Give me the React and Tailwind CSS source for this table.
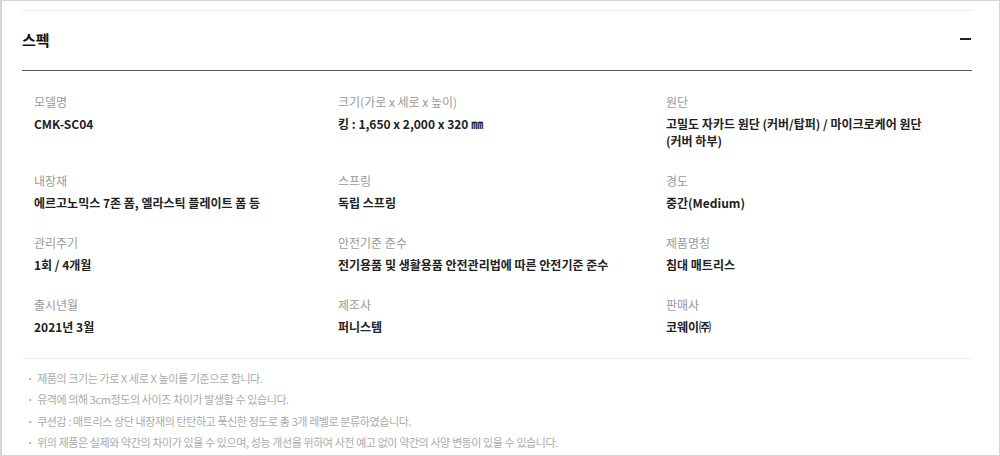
const specs = [
  { label: '모델명', value: 'CMK-SC04' },
  { label: '크기(가로 x 세로 x 높이)', value: '킹 : 1,650 x 2,000 x 320 ㎜' },
  { label: '원단', value: '고밀도 자카드 원단 (커버/탑퍼) / 마이크로케어 원단 (커버 하부)' },
  { label: '내장재', value: '에르고노믹스 7존 폼, 엘라스틱 플레이트 폼 등' },
  { label: '스프링', value: '독립 스프링' },
  { label: '경도', value: '중간(Medium)' },
  { label: '관리주기', value: '1회 / 4개월' },
  { label: '안전기준 준수', value: '전기용품 및 생활용품 안전관리법에 따른 안전기준 준수' },
  { label: '제품명칭', value: '침대 매트리스' },
  { label: '출시년월', value: '2021년 3월' },
  { label: '제조사', value: '퍼니스템' },
  { label: '판매사', value: '코웨이㈜' },
];

const notes = [
  '제품의 크기는 가로 X 세로 X 높이를 기준으로 합니다.',
  '유격에 의해 3cm정도의 사이즈 차이가 발생할 수 있습니다.',
  '쿠션감 : 매트리스 상단 내장재의 탄탄하고 푹신한 정도로 총 3개 레벨로 분류하였습니다.',
  '위의 제품은 실제와 약간의 차이가 있을 수 있으며, 성능 개선을 위하여 사전 예고 없이 약간의 사양 변동이 있을 수 있습니다.',
];

export default function App() {
  return (
    <div className="w-[1000px] h-[456px] overflow-hidden bg-white border border-l-2 border-[#d6d6d6] font-['Noto_Sans_CJK_KR','Noto_Sans',sans-serif]">
      <div className="ml-[20px] mt-[9px] w-[950px] border-t border-[#ececec]">
        {/* Header */}
        <div className="h-[60px] pb-[3px] flex items-center justify-between border-b border-[#555]">
          <h2 className="text-[15px] font-bold text-[#111] leading-none">스펙</h2>
          <span className="w-[11px] h-[2px] bg-[#222] mr-[1px]" />
        </div>

        {/* Spec grid */}
        <div className="pt-[22px] pb-[23px] pl-[12px] grid grid-cols-[304px_328px_262px] gap-y-[23px] border-b border-[#eeeeee]">
          {specs.map((s) => (
            <div key={s.label}>
              <p className="text-[12px] leading-[18px] text-[#999]">{s.label}</p>
              <p className="mt-[4px] text-[12px] leading-[17px] font-bold text-[#222]">{s.value}</p>
            </div>
          ))}
        </div>

        {/* Notes */}
        <ul className="pt-[9px] pl-[5px] text-[11px] leading-[21.3px] tracking-[-0.4px] text-[#aaaaaa]">
          {notes.map((n) => (
            <li key={n}>
              <span className="font-bold mr-[4px]">·</span>
              {n}
            </li>
          ))}
        </ul>
      </div>
    </div>
  );
}
